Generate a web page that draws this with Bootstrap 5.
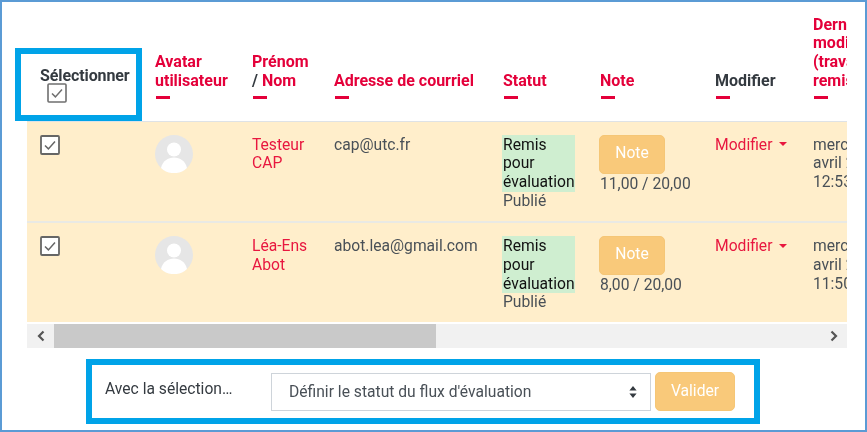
<!DOCTYPE html>
<html lang="fr">
<head>
<meta charset="utf-8">
<title>Travaux remis</title>
<link href="https://cdn.jsdelivr.net/npm/bootstrap@5.3.0/dist/css/bootstrap.min.css" rel="stylesheet">
<style>
html,body{margin:0;height:432px;overflow:hidden;background:#fff}
body{font-family:Roboto,"Liberation Sans",sans-serif;font-size:15.65px;line-height:18.75px;color:#495057}
.shot-frame{position:relative;width:867px;height:432px;border:2px solid #5b9bd5;padding-left:25px;background:#fff;filter:blur(.35px)}
.grid-clip{width:820px;overflow:hidden}
.grading{table-layout:fixed;width:873px;margin:0;border-collapse:collapse;--bs-table-bg:transparent;--bs-table-color:#495057}
.grading col.c1{width:115px}.grading col.c2{width:97px}.grading col.c3{width:82px}.grading col.c4{width:169px}
.grading col.c5{width:97px}.grading col.c6{width:115px}.grading col.c7{width:98px}.grading col.c8{width:100px}
.grading th{height:119px;padding:0 0 22px 13px;vertical-align:bottom;font-size:16px;font-weight:700;color:#e4003a;border:0;border-bottom:1px solid #dee2e6}
.grading th.sel-head,.grading th.dark-head{color:#343a40}
.grading th.sel-head{padding-bottom:18px;white-space:nowrap;letter-spacing:-.1px}
.grading th .slash{color:#343a40}
.sort-dash{display:block;width:14px;height:3px;margin:5px 0 0 1px;background:#e4003a}
.grading td{padding:14px 0 0 13px;vertical-align:top;border:0;background:#ffeecb;overflow:hidden;font-size:15.65px}
.grading td.box-cell{padding-top:13px}
.grading tr.row-one td{height:101px;border-bottom:2px solid #e9e9e4}
.grading tr.row-two td{height:100px}
.red-link{color:#e8173f;text-decoration:none}
.tick{display:block;width:20px;height:20px}
.tick-head{margin:-3px 0 0 7px}
.face{display:block;width:38px;height:38px}
.state-ok{display:block;width:73px;margin-left:-1px;padding:1px 0 0 1px;background:#cfeed0;color:#111}
.note-btn{display:block;width:66px;height:39px;margin:0 0 1px -1px;padding:0 0 4px;background:#f9c97a;border:1px solid #f5c676;border-radius:5px;color:#fff;font-size:15.65px;line-height:33px}
.edit-link.dropdown-toggle::after{margin-left:7px;vertical-align:.2em;border-top-width:.27em;border-right-width:.27em;border-left-width:.27em}
.fake-scroll{display:flex;align-items:stretch;width:820px;height:24px;margin-top:2px;background:#f1f1f1}
.arrow-cell{flex:0 0 27px;display:flex;align-items:center;justify-content:center}
.thumb-bar{flex:0 0 382px;background:#c9c9c9}
.fill-bar{flex:1}
.action-box{display:flex;align-items:center;width:674px;height:65px;margin:11px 0 0 59px;border:6px solid #00a3e8;background:#fff;position:relative}
.action-label{width:179px;padding-left:13px;margin-top:-4px;color:#343a40;white-space:nowrap}
.action-select{width:380px;height:38px;flex:none;padding:0 0 0 17px;border:1px solid #ced4da;border-radius:0;font-size:15.65px;color:#495057;font-family:Roboto,"Liberation Sans",sans-serif;
background-image:url("data:image/svg+xml,%3Csvg xmlns='http://www.w3.org/2000/svg' width='8' height='12'%3E%3Cpath d='M4 0l3.6 4.6H.4zM4 12L.4 7.4h7.2z' fill='%23343a40'/%3E%3C/svg%3E");background-size:8px 12px;background-position:right 13px center}
.go-btn{width:80px;height:39px;flex:none;margin-left:4px;padding:0 0 2px;background:#f9c97a;border:1px solid #f5c676;border-radius:5px;color:#fff;font-size:15.65px}
.pick-box{position:absolute;left:13px;top:46px;width:127px;height:73px;border:6px solid #00a3e8;pointer-events:none}
</style>
</head>
<body>
<div class="shot-frame">
  <div class="grid-clip">
    <table class="table grading">
      <colgroup><col class="c1"><col class="c2"><col class="c3"><col class="c4"><col class="c5"><col class="c6"><col class="c7"><col class="c8"></colgroup>
      <thead>
        <tr>
          <th class="sel-head">Sélectionner
            <svg class="tick tick-head" viewBox="0 0 20 20"><rect x="1" y="1" width="18" height="18" rx="1" fill="#fff" stroke="#6f6f6f" stroke-width="1.6"/><path d="M5 10.500l3.400 3.400L15 6.600" fill="none" stroke="#6f6f6f" stroke-width="1.5"/></svg>
          </th>
          <th>Avatar utilisateur<span class="sort-dash"></span></th>
          <th>Prénom<br><span class="slash">/</span> Nom<span class="sort-dash"></span></th>
          <th>Adresse de courriel<span class="sort-dash"></span></th>
          <th>Statut<span class="sort-dash"></span></th>
          <th>Note<span class="sort-dash"></span></th>
          <th class="dark-head">Modifier<span class="sort-dash"></span></th>
          <th>Dernière modification (travail remis)<span class="sort-dash"></span></th>
        </tr>
      </thead>
      <tbody>
        <tr class="row-one">
          <td class="box-cell"><svg class="tick" viewBox="0 0 20 20"><rect x="1" y="1" width="18" height="18" rx="1" fill="#fff" stroke="#666" stroke-width="1.8"/><path d="M5 10.500l3.400 3.400L15 6.600" fill="none" stroke="#666" stroke-width="1.5"/></svg></td>
          <td class="box-cell"><svg class="face" viewBox="0 0 38 38"><circle cx="19" cy="19" r="19" fill="#e6e6e6"/><circle cx="19" cy="14.500" r="7" fill="#fff"/><path d="M6 33c1.500-7 7-10.500 13-10.500S30.500 26 32 33a19 19 0 0 1-26 0z" fill="#fff"/></svg></td>
          <td><a class="red-link" href="#">Testeur CAP</a></td>
          <td>cap@utc.fr</td>
          <td class="box-cell"><span class="state-ok">Remis pour évaluation</span>Publié</td>
          <td class="box-cell"><button type="button" class="btn note-btn">Note</button><div>11,00 / 20,00</div></td>
          <td><a class="red-link edit-link dropdown-toggle" href="#">Modifier</a></td>
          <td>mercredi 15<br>avril 2020,<br>12:53</td>
        </tr>
        <tr class="row-two">
          <td class="box-cell"><svg class="tick" viewBox="0 0 20 20"><rect x="1" y="1" width="18" height="18" rx="1" fill="#fff" stroke="#666" stroke-width="1.8"/><path d="M5 10.500l3.400 3.400L15 6.600" fill="none" stroke="#666" stroke-width="1.5"/></svg></td>
          <td class="box-cell"><svg class="face" viewBox="0 0 38 38"><circle cx="19" cy="19" r="19" fill="#e6e6e6"/><circle cx="19" cy="14.500" r="7" fill="#fff"/><path d="M6 33c1.500-7 7-10.500 13-10.500S30.500 26 32 33a19 19 0 0 1-26 0z" fill="#fff"/></svg></td>
          <td><a class="red-link" href="#">Léa-Ens Abot</a></td>
          <td>abot.lea@gmail.com</td>
          <td class="box-cell"><span class="state-ok">Remis pour évaluation</span>Publié</td>
          <td class="box-cell"><button type="button" class="btn note-btn">Note</button><div>8,00 / 20,00</div></td>
          <td><a class="red-link edit-link dropdown-toggle" href="#">Modifier</a></td>
          <td>mercredi 15<br>avril 2020,<br>11:50</td>
        </tr>
      </tbody>
    </table>
  </div>
  <div class="fake-scroll">
    <div class="arrow-cell"><svg width="10" height="12" viewBox="0 0 10 12"><path d="M7.500 1.500L3 6l4.500 4.500" fill="none" stroke="#555" stroke-width="2.200"/></svg></div>
    <div class="thumb-bar"></div>
    <div class="fill-bar"></div>
    <div class="arrow-cell"><svg width="10" height="12" viewBox="0 0 10 12"><path d="M2.500 1.500L7 6l-4.500 4.500" fill="none" stroke="#555" stroke-width="2.200"/></svg></div>
  </div>
  <form class="action-box">
    <div class="action-label">Avec la sélection…</div>
    <select class="form-select action-select"><option>Définir le statut du flux d'évaluation</option></select>
    <button type="button" class="btn go-btn">Valider</button>
  </form>
  <div class="pick-box"></div>
</div>
<script src="https://cdn.jsdelivr.net/npm/bootstrap@5.3.0/dist/js/bootstrap.bundle.min.js"></script>
</body>
</html>
